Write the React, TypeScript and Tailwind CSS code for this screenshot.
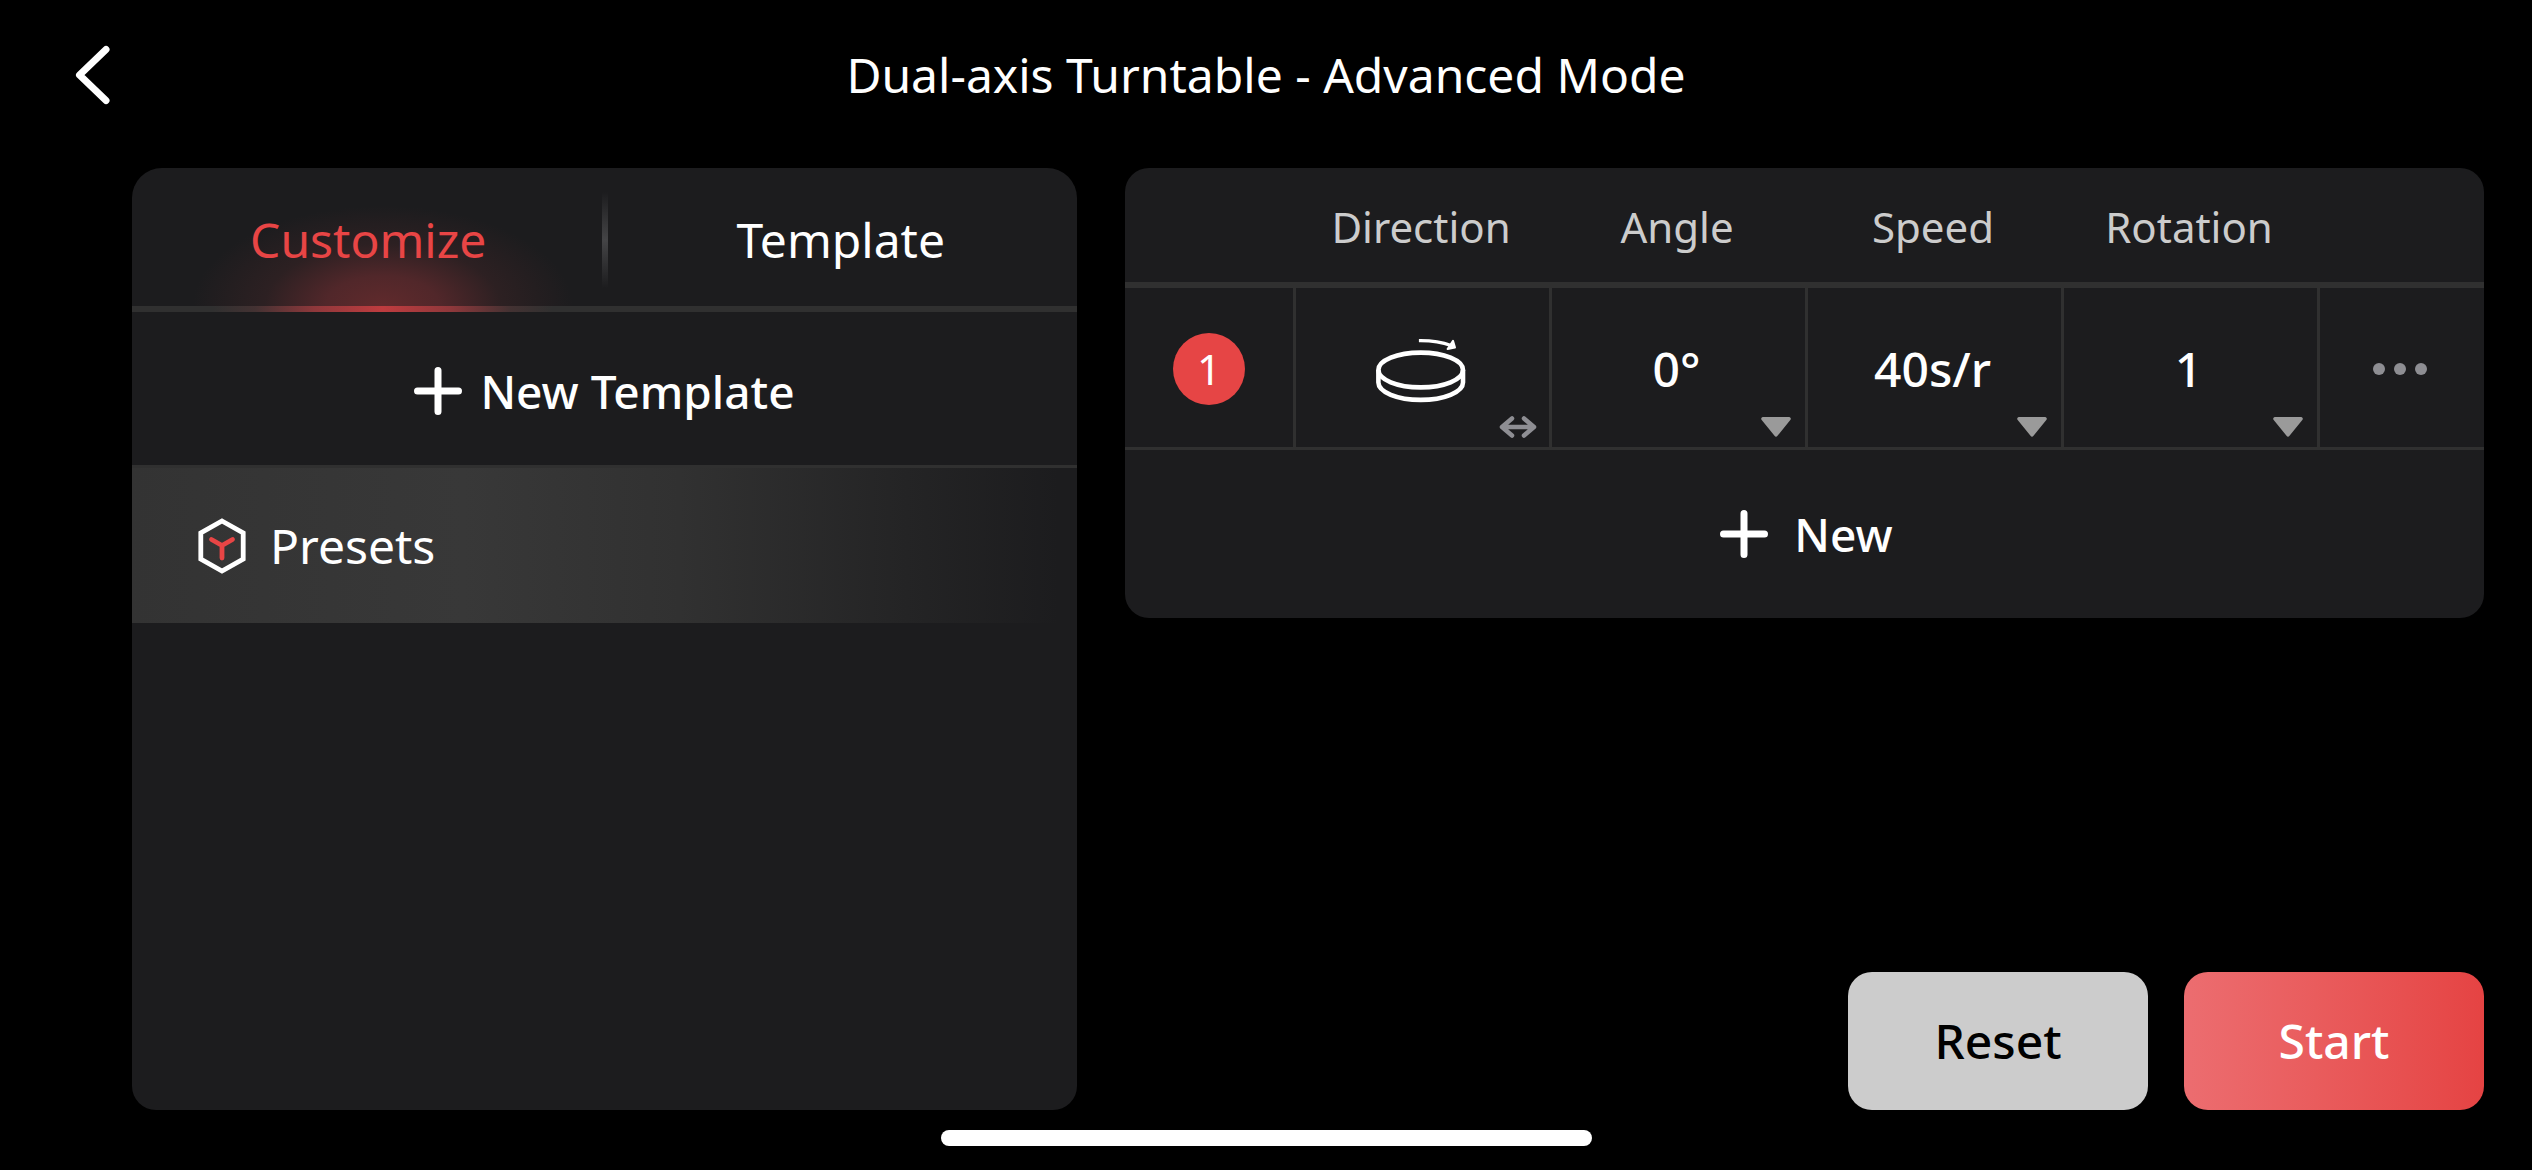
import { useState } from 'react';

/** Hoisted back chevron for the title bar. */
const BACK_ICON = (
  <svg
    width="48"
    height="72"
    viewBox="0 0 48 72"
    fill="none"
    stroke="currentColor"
    strokeWidth="7"
    strokeLinecap="round"
    strokeLinejoin="round"
    aria-hidden="true"
  >
    <path d="M38 10.5L11.5 36L38 61.5" />
  </svg>
);

const PLUS_ICON = (
  <svg
    width="48"
    height="48"
    viewBox="0 0 48 48"
    fill="none"
    stroke="currentColor"
    strokeWidth="7"
    strokeLinecap="round"
    aria-hidden="true"
  >
    <path d="M24 3.5v41M3.5 24h41" />
  </svg>
);

/** Hexagon with the red Y mark, shown beside the presets entry. */
const PRESETS_ICON = (
  <svg
    width="48"
    height="56"
    viewBox="0 0 48 56"
    fill="none"
    strokeWidth="4.8"
    aria-hidden="true"
  >
    <path d="M24 3L45.2 15v26L24 53L2.8 41V15z" stroke="white" />
    <path
      d="M13.500 21.500L24 27.500l10.500-6M24 27.500v12.500"
      stroke="#e84545"
      strokeLinecap="round"
      strokeLinejoin="round"
    />
  </svg>
);

/** Disc with a curved arrow above it. */
const TURNTABLE_ICON = (
  <svg
    width="90"
    height="66"
    viewBox="0 0 90 66"
    fill="none"
    stroke="currentColor"
    strokeWidth="4.6"
    aria-hidden="true"
  >
    <ellipse cx="44.7" cy="31" rx="42.3" ry="17.4" />
    <path d="M2.4 31v12.500c0 9.600 19 17.400 42.300 17.400S87 53.100 87 43.500V31" />
    <path d="M44.500 1.700c11.500 0 22 1.600 30.500 4.800" strokeWidth="3.200" strokeLinecap="square" />
    <path
      d="M77 1.800L79 8.600L71.600 10z"
      fill="currentColor"
      strokeWidth="2"
      strokeLinejoin="round"
    />
  </svg>
);

const SWAP_ICON = (
  <svg
    width="38"
    height="24"
    viewBox="0 0 38 24"
    fill="none"
    stroke="currentColor"
    strokeWidth="4.5"
    strokeLinecap="round"
    strokeLinejoin="round"
    aria-hidden="true"
  >
    <path d="M3 12h32M13 3.500L3 12l10 8.500M25 3.500L35 12l-10 8.500" />
  </svg>
);

const CARET_ICON = (
  <svg width="30" height="20" viewBox="0 0 30 20" fill="currentColor" aria-hidden="true">
    <path d="M2 0h26a1.800 1.800 0 0 1 1.500 2.800L16.500 18.800a1.900 1.900 0 0 1-3 0L.5 2.800A1.800 1.800 0 0 1 2 0z" />
  </svg>
);

const MORE_ICON = (
  <svg width="54" height="12" viewBox="0 0 54 12" fill="currentColor" aria-hidden="true">
    <circle cx="6" cy="6" r="6" />
    <circle cx="27" cy="6" r="6" />
    <circle cx="48" cy="6" r="6" />
  </svg>
);

type Tab = 'Customize' | 'Template';

interface Step {
  angle: string;
  speed: string;
  rotation: string;
  clockwise: boolean;
}

const DEFAULT_STEP: Step = { angle: '0°', speed: '40s/r', rotation: '1', clockwise: true };

const ANGLES = ['0°', '15°', '30°', '45°'];
const SPEEDS = ['20s/r', '40s/r', '60s/r'];
const ROTATIONS = ['1', '2', '3', '4'];

interface SelectCellProps {
  label: string;
  value: string;
  options: string[];
  onChange: (value: string) => void;
}

/** Table cell holding a centered drop-down with a caret in the corner. */
function SelectCell({ label, value, options, onChange }: SelectCellProps) {
  return (
    <td className="relative border-b-3 border-l-3 border-[#303030] p-0">
      <select
        aria-label={label}
        value={value}
        onChange={(e) => onChange(e.target.value)}
        className="block h-[159px] w-full cursor-pointer appearance-none bg-transparent pt-0.5 pr-1 text-center font-medium [text-align-last:center]"
      >
        {options.map((option) => (
          <option key={option} value={option}>
            {option}
          </option>
        ))}
      </select>
      <span className="pointer-events-none absolute right-3.5 bottom-2.5 text-[#9a9a9a]">
        {CARET_ICON}
      </span>
    </td>
  );
}

interface TabButtonProps {
  name: Tab;
  active: boolean;
  onSelect: (name: Tab) => void;
}

function TabButton({ name, active, onSelect }: TabButtonProps) {
  return (
    <button
      type="button"
      role="tab"
      aria-selected={active}
      onClick={() => onSelect(name)}
      className={`relative h-36 flex-1 cursor-pointer ${active ? 'text-[#e84545]' : 'text-white'}`}
    >
      {/* Glow rising from the underline of the active tab */}
      {active && (
        <>
          <span className="absolute inset-x-0 top-0 bottom-1.5 bg-[radial-gradient(ellipse_190px_100px_at_53%_100%,#602a2c,#51272a_30%,#38232599_62%,#1c1c1e00)]" />
          <span className="absolute inset-x-0 bottom-0 h-1.5 bg-[radial-gradient(circle_170px_at_53%_50%,#bf3c3f,#8f383b_40%,#50333499_75%,#30303000)]" />
        </>
      )}
      <span className="relative">{name}</span>
    </button>
  );
}

function TemplatePanel() {
  const [tab, setTab] = useState<Tab>('Customize');

  return (
    <section className="flex w-[945px] shrink-0 flex-col overflow-hidden rounded-t-[30px] rounded-b-3xl bg-[#1c1c1e]">
      <div
        role="tablist"
        className="relative flex bg-[linear-gradient(to_top,#303030_6px,transparent_6px)]"
      >
        <TabButton name="Customize" active={tab === 'Customize'} onSelect={setTab} />
        <span className="absolute top-6 left-1/2 h-24 w-1.5 -translate-x-1/2 bg-linear-to-b from-transparent via-[#444446] to-transparent" />
        <TabButton name="Template" active={tab === 'Template'} onSelect={setTab} />
      </div>
      <button
        type="button"
        className="flex h-39 cursor-pointer items-center justify-center gap-4.5 border-b-3 border-[#303030] pt-1 text-[46px] font-medium"
      >
        {PLUS_ICON}
        New Template
      </button>
      <button
        type="button"
        className="flex h-[155px] cursor-pointer items-center gap-6 bg-[linear-gradient(to_right,#333333,#383838_35%,#313131_58%,#242425_82%,#1c1c1e_98%)] pl-[66px]"
      >
        {PRESETS_ICON}
        Presets
      </button>
    </section>
  );
}

interface StepRowProps {
  index: number;
  step: Step;
  onChange: (step: Step) => void;
}

function StepRow({ index, step, onChange }: StepRowProps) {
  return (
    <tr>
      <td className="border-b-3 border-[#303030] p-0 pt-0.5">
        <span className="mx-auto flex size-18 items-center justify-center rounded-full bg-[#e64545] text-[42px]">
          {index}
        </span>
      </td>
      <td className="relative border-b-3 border-l-3 border-[#303030] p-0">
        <button
          type="button"
          aria-label="Reverse direction"
          onClick={() => onChange({ ...step, clockwise: !step.clockwise })}
          className="flex h-[159px] w-full cursor-pointer items-center justify-center pt-2 pr-1"
        >
          <span className={step.clockwise ? '' : '-scale-x-100'}>{TURNTABLE_ICON}</span>
          <span className="absolute right-3 bottom-2 text-[#8e8e93]">{SWAP_ICON}</span>
        </button>
      </td>
      <SelectCell
        label="Angle"
        value={step.angle}
        options={ANGLES}
        onChange={(angle) => onChange({ ...step, angle })}
      />
      <SelectCell
        label="Speed"
        value={step.speed}
        options={SPEEDS}
        onChange={(speed) => onChange({ ...step, speed })}
      />
      <SelectCell
        label="Rotation"
        value={step.rotation}
        options={ROTATIONS}
        onChange={(rotation) => onChange({ ...step, rotation })}
      />
      <td className="border-b-3 border-l-3 border-[#303030] p-0">
        <button
          type="button"
          aria-label="More actions"
          className="flex h-[159px] w-full cursor-pointer items-center justify-center pt-0.5 pr-1 text-[#8e8e93]"
        >
          {MORE_ICON}
        </button>
      </td>
    </tr>
  );
}

export default function App() {
  const [steps, setSteps] = useState<Step[]>([DEFAULT_STEP]);

  return (
    <div className="flex min-h-screen flex-col bg-black font-['Noto_Sans',sans-serif] text-[48px] leading-none text-white">
      <header className="grid h-[150px] grid-cols-[1fr_auto_1fr] items-center px-17">
        <button type="button" aria-label="Back" className="w-12 cursor-pointer">
          {BACK_ICON}
        </button>
        <h1>Dual-axis Turntable - Advanced Mode</h1>
      </header>

      <main className="flex flex-1 gap-12 pt-4.5 pr-12 pl-33">
        <TemplatePanel />

        <div className="flex flex-1 flex-col justify-between">
          <section className="overflow-hidden rounded-3xl bg-[#1c1c1e]">
            <table className="w-full table-fixed border-separate border-spacing-0">
              <colgroup>
                <col className="w-42" />
                <col span={4} />
                <col className="w-[167px]" />
              </colgroup>
              <thead>
                <tr className="h-30 text-[42px] text-[#cccccc]">
                  <td className="border-b-6 border-[#303030]" />
                  {['Direction', 'Angle', 'Speed', 'Rotation'].map((name) => (
                    <th
                      key={name}
                      scope="col"
                      className="border-b-6 border-[#303030] p-0 pt-1 font-normal"
                    >
                      {name}
                    </th>
                  ))}
                  <td className="border-b-6 border-[#303030]" />
                </tr>
              </thead>
              <tbody>
                {steps.map((step, i) => (
                  <StepRow
                    key={i}
                    index={i + 1}
                    step={step}
                    onChange={(next) => setSteps(steps.map((s, j) => (j === i ? next : s)))}
                  />
                ))}
              </tbody>
            </table>
            <button
              type="button"
              onClick={() => setSteps([...steps, DEFAULT_STEP])}
              className="flex h-42 w-full cursor-pointer items-center justify-center gap-6.5 pl-1 text-[46px] font-medium"
            >
              {PLUS_ICON}
              New
            </button>
          </section>

          <div className="flex justify-end gap-9">
            <button
              type="button"
              onClick={() => setSteps([DEFAULT_STEP])}
              className="h-[138px] w-75 cursor-pointer rounded-3xl bg-[#cccccc] font-medium text-black"
            >
              Reset
            </button>
            <button
              type="button"
              className="h-[138px] w-75 cursor-pointer rounded-3xl bg-linear-to-r from-[#ec6d70] to-[#e54343] font-medium"
            >
              Start
            </button>
          </div>
        </div>
      </main>

      {/* Home indicator */}
      <footer className="flex h-15 shrink-0 justify-center pt-5">
        <div className="h-4 w-[651px] rounded-full bg-white" />
      </footer>
    </div>
  );
}
